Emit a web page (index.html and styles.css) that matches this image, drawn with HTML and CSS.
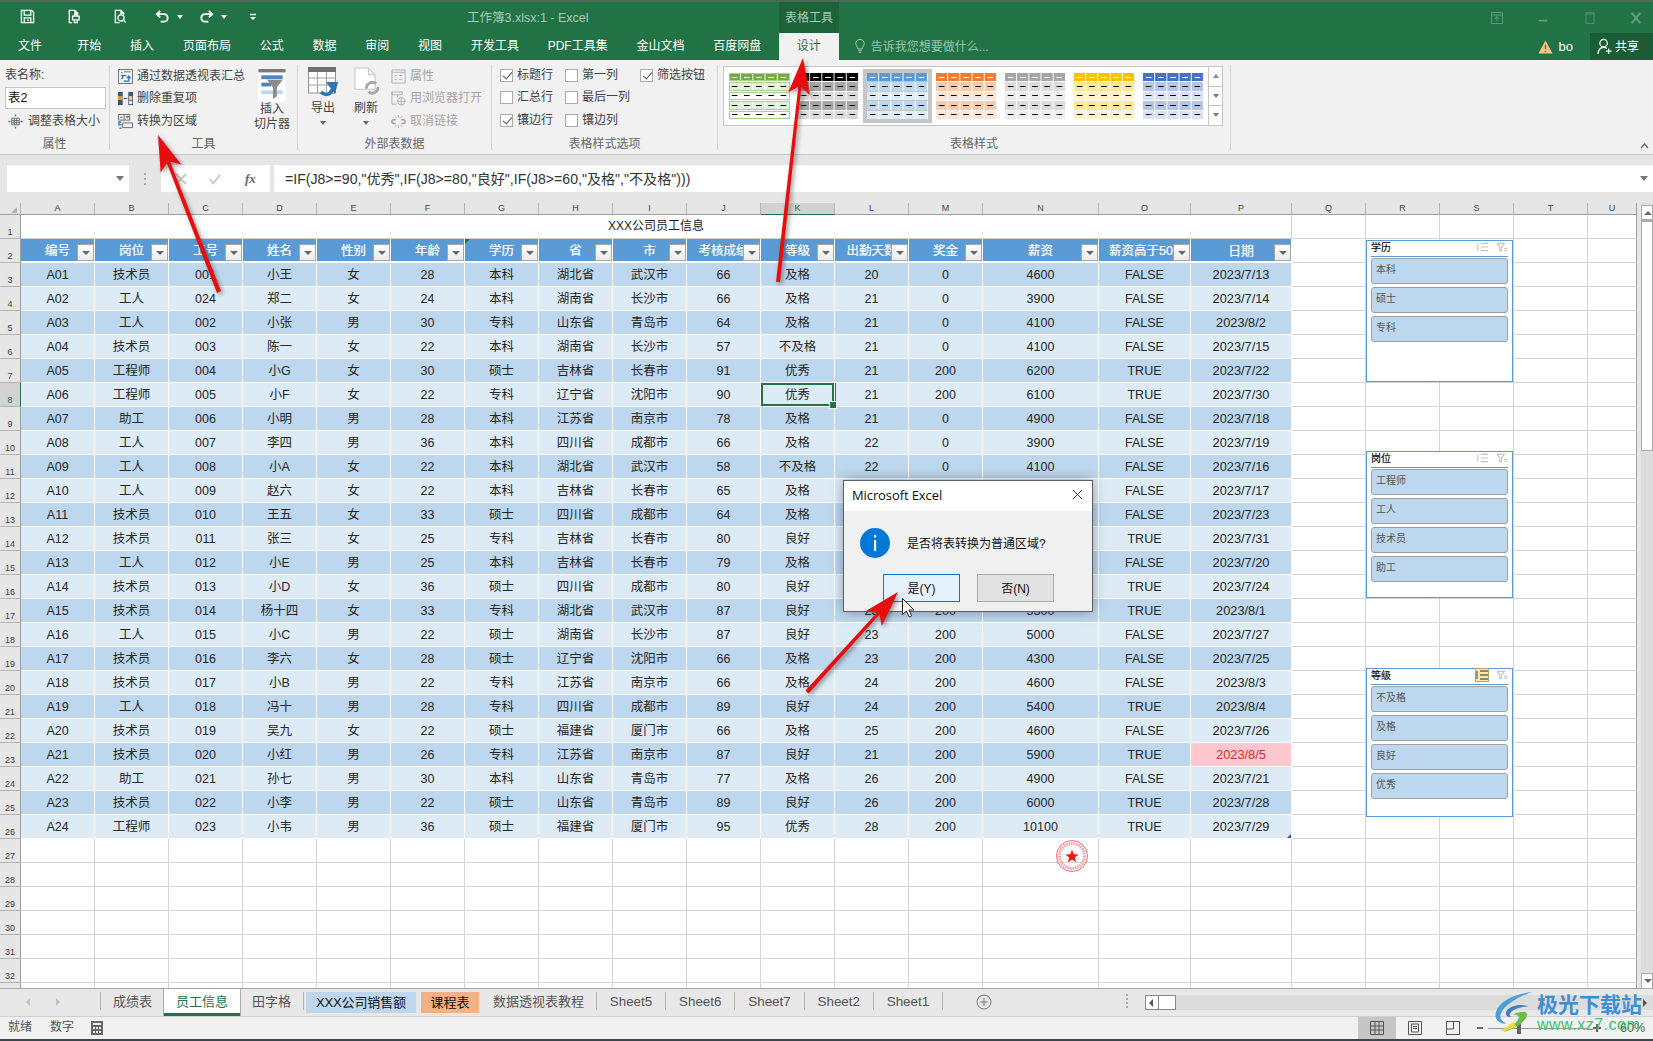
FILE: index.html
```html
<!DOCTYPE html>
<html lang="zh-CN">
<head>
<meta charset="utf-8">
<title>工作簿3.xlsx:1 - Excel</title>
<link rel="stylesheet" href="styles.css">
</head>
<body>
<div class="app">

<header class="titlebar">
  <div class="qat">
    <svg class="q q1" viewBox="0 0 16 16"><path d="M1.5 1.5h11l2 2v11h-13z M4.5 1.5v5h7v-5 M4.5 14.5v-5h7v5 M8.5 11v2"/></svg>
    <svg class="q q2" viewBox="0 0 16 16"><path d="M3.5 9V1.5h6l3 3V6 M9.5 1.5v3h3 M3.5 9v5.500h3 M7 7.500h7v4H7z M9 7.500V6h3v1.500 M9 11.500v3h3v-3"/></svg>
    <svg class="q q3" viewBox="0 0 16 16"><path d="M7 14.500H2.500v-13h6l3 3V6 M8.500 1.500v3h3 M13.500 14.500l-2.300-2.600"/><circle cx="8.500" cy="9.500" r="3.300"/></svg>
    <svg class="q q4" viewBox="0 0 16 16"><path d="M5.500 2 2 5.500 5.500 9" class="thick"/><path d="M2.500 5.500h7a4 4 0 0 1 0 8H6" class="thick"/></svg>
    <span class="caret q5"></span>
    <svg class="q q6" viewBox="0 0 16 16"><path d="M10.500 2 14 5.500 10.500 9" class="thick"/><path d="M13.500 5.500h-7a4 4 0 0 0 0 8H10" class="thick"/></svg>
    <span class="caret q7"></span>
    <svg class="q q8" viewBox="0 0 8 8"><path d="M1 1.500h6"/><path d="M1 4h6L4 7z" class="solid"/></svg>
  </div>
  <div class="doc">工作簿3.xlsx:1 - Excel</div>
  <div class="ctx">表格工具</div>
  <div class="winctl">
    <svg viewBox="0 0 14 14"><path d="M.5.5h13v13H.5z M.5 3.500h13 M7 11V5.500 M4.500 8 7 5.500 9.500 8"/></svg>
    <svg viewBox="0 0 14 14"><path d="M2 10h10" class="thick"/></svg>
    <svg viewBox="0 0 14 18"><path d="M1 1h12v16H1z M1 3h12" /></svg>
    <svg viewBox="0 0 14 14"><path d="m2 1 10 12M12 1 2 13" class="thick"/></svg>
  </div>
</header>

<nav class="tabs">
  <span class="tab first">文件</span><span class="tab">开始</span><span class="tab">插入</span><span class="tab">页面布局</span><span class="tab">公式</span><span class="tab">数据</span><span class="tab">审阅</span><span class="tab">视图</span><span class="tab">开发工具</span><span class="tab">PDF工具集</span><span class="tab">金山文档</span><span class="tab">百度网盘</span><span class="tab active">设计</span>
  <span class="tell">
    <svg viewBox="0 0 12 18"><path d="M3.500 12C3 9 1 8.500 1 5.500a5 5 0 0 1 10 0c0 3-2 3.500-2.500 6.500zM4 14h4M4.500 16h3"/></svg>
    告诉我您想要做什么...
  </span>
  <span class="user">
    <svg class="warn" viewBox="0 0 16 16"><path d="M8 1 15.500 15H.5z"/><path d="M8 5.500v5M8 12v1.500" class="mark"/></svg>
    <span>bo</span>
  </span>
  <span class="share">
    <svg viewBox="0 0 16 18"><circle cx="7" cy="5.500" r="4"/><path d="M1 17c.5-4.500 2.500-7 6-7 1.500 0 2.600.4 3.500 1.200M12.500 11v6M9.500 14h6"/></svg>
    共享
  </span>
</nav>

<section class="ribbon">
  <div class="group g1">
    <div class="gbody col">
      <div class="namelabel">表名称:</div>
      <div class="nameinput">表2</div>
      <div class="cmd resize">
        <svg class="ico" viewBox="0 0 16 16"><path class="gr" d="M4 4.500h8v7H4zM4 7h8M4 9.300h8M6.700 4.500v7M9.300 4.500v7"/><path class="bl" d="M8 .5v2M8 13.500v2M.5 8h2M13.500 8h2"/></svg>
        <span>调整表格大小</span>
      </div>
    </div>
    <div class="glabel">属性</div>
  </div>
  <div class="group g2">
    <div class="gbody row">
      <div class="col cmds">
        <div class="cmd">
          <svg class="ico" viewBox="0 0 16 16"><path class="gr" d="M.5.5h15v15H.5zM3 4h2M3 7h2M3 10h2M6.500 3h7"/><path class="bl" d="M6 13h5.500V8M9.500 10l2-2.500 2 2.500M9 7H5v3"/></svg>
          <span>通过数据透视表汇总</span>
        </div>
        <div class="cmd">
          <svg class="ico" viewBox="0 0 16 16"><rect x="0" y="1" width="5" height="14" fill="#44546a"/><rect x="0" y="5.500" width="5" height="4" fill="#e0a03c"/><rect x="11" y="1" width="5" height="14" fill="#44546a"/><rect x="11.800" y="5.500" width="3.400" height="4" fill="#f3d48e"/><rect x="11.800" y="10.500" width="3.400" height="3.500" fill="#fff"/><path class="bl" d="M6 8h4"/></svg>
          <span>删除重复项</span>
        </div>
        <div class="cmd">
          <svg class="ico" viewBox="0 0 16 16"><path class="gr" d="M.5.5h12v6H.5zM6.500.5v6M2 3.500h3M8.500 2.500h3l-1.500 2z"/><path class="gr" d="M5 9.500h10.500v5H5z"/><path class="bl" d="M3.500 8.500H1v3h3M1.500 15H4"/></svg>
          <span>转换为区域</span>
        </div>
      </div>
      <div class="bigbtn slicerbtn">
        <svg class="bigico" viewBox="0 0 28 34"><path d="M0 0h28v34H0z" fill="#fff"/><path d="M0 0h28v3.500H0z" fill="#7a7a7a"/><path d="M3 6.500h22v4H3z" fill="#4e86bd"/><path d="M3 14h10v4H3z" fill="#4e86bd"/><path d="M3 22h22v4H3z" fill="#bdd7ee"/><path d="M9 11h16l-6 8v9l-4 3V19z" fill="#8c8c8c"/></svg>
        <span>插入</span><span>切片器</span>
      </div>
    </div>
    <div class="glabel">工具</div>
  </div>
  <div class="group g3">
    <div class="gbody row">
      <div class="bigbtn export">
        <svg class="bigico" viewBox="0 0 30 30"><path d="M.5 4h27v22H.5z" fill="#fff" stroke="#8c8c8c"/><path d="M0 0h28v5H0z" fill="#707070"/><path d="M.5 11h27M.5 18h27M9.500 5v21M18.500 5v21" stroke="#a0a0a0" fill="none"/><path d="M13 25c4 4 9 3 11-2l1.500-3" stroke="#2e75b6" stroke-width="3.500" fill="none"/><path d="M18 15h12l-3 12z" fill="#2e75b6"/></svg>
        <span>导出</span><span class="caret dark"></span>
      </div>
      <div class="bigbtn refresh">
        <svg class="bigico" viewBox="0 0 26 30"><path d="M1 .5h14l7 7v15H1z M15 .5v7h7" fill="#fff" stroke="#c4c4c4"/><path d="M13 22a6 6 0 0 1 10-5M25 20a6 6 0 0 1-10 5" stroke="#a8a8a8" stroke-width="3" fill="none"/></svg>
        <span>刷新</span><span class="caret dark"></span>
      </div>
      <div class="col cmds off">
        <div class="cmd">
          <svg class="ico" viewBox="0 0 16 16"><path class="lg" d="M1 1h14v14H1zM1 3.500h14M4 7h2.500M8.500 7H12M4 11h2.500M8.500 11H12"/></svg>
          <span>属性</span>
        </div>
        <div class="cmd">
          <svg class="ico" viewBox="0 0 16 16"><path class="lg" d="M1 1h11v3H1zM1 1v13h5M7 4v3"/><circle class="lg" cx="11" cy="11" r="4"/><path class="lg" d="M7 11h8M11 7v8"/></svg>
          <span>用浏览器打开</span>
        </div>
        <div class="cmd">
          <svg class="ico" viewBox="0 0 16 16"><path class="lg2" d="M5 6H3a2 2 0 0 0 0 4h2M11 6h2a2 2 0 0 1 0 4h-2"/><path class="lg" d="M8 1v3M4 2l2 2.500M12 2l-2 2.500M8 15v-3M4 14l2-2.500M12 14l-2-2.500"/></svg>
          <span>取消链接</span>
        </div>
      </div>
    </div>
    <div class="glabel">外部表数据</div>
  </div>
  <div class="group g4">
    <div class="gbody checks">
      <label class="chk"><i class="box on"></i>标题行</label>
      <label class="chk"><i class="box"></i>第一列</label>
      <label class="chk"><i class="box on"></i>筛选按钮</label>
      <label class="chk"><i class="box"></i>汇总行</label>
      <label class="chk"><i class="box"></i>最后一列</label>
      <span></span>
      <label class="chk"><i class="box on"></i>镶边行</label>
      <label class="chk"><i class="box"></i>镶边列</label>
    </div>
    <div class="glabel">表格样式选项</div>
  </div>
  <div class="group g5">
    <div class="gbody">
      <div class="gallery">
        <div class="cell"><div class="sw green"><i></i><i></i><i></i><i></i><i></i></div></div>
        <div class="cell"><div class="sw black"><i></i><i></i><i></i><i></i><i></i></div></div>
        <div class="cell sel"><div class="sw blue"><i></i><i></i><i></i><i></i><i></i></div></div>
        <div class="cell"><div class="sw orange"><i></i><i></i><i></i><i></i><i></i></div></div>
        <div class="cell"><div class="sw gray"><i></i><i></i><i></i><i></i><i></i></div></div>
        <div class="cell"><div class="sw yellow"><i></i><i></i><i></i><i></i><i></i></div></div>
        <div class="cell"><div class="sw navy"><i></i><i></i><i></i><i></i><i></i></div></div>
        <div class="gscroll"><b class="up"></b><b class="dn"></b><b class="more"></b></div>
      </div>
    </div>
    <div class="glabel">表格样式</div>
  </div>
  <div class="ribbonend"><svg viewBox="0 0 9 6"><path d="M1 5 4.500 1 8 5"/></svg></div>
</section>

<div class="fbar">
  <div class="namebox"><span class="tri"></span></div>
  <div class="fdots"></div>
  <div class="fbtns">
    <svg viewBox="0 0 12 12"><path d="m1 1 10 10M11 1 1 11"/></svg>
    <svg viewBox="0 0 14 12"><path d="m1 6 4 5 8-10"/></svg>
    <em>fx</em>
  </div>
  <div class="formula"><span>=IF(J8&gt;=90,"优秀",IF(J8&gt;=80,"良好",IF(J8&gt;=60,"及格","不及格")))</span><i class="fexp"></i></div>
</div>

<main class="sheet">
<div class="pane">
<table class="grid">
<colgroup><col class="w21"><col class="w74" span="13"><col class="w116"><col class="w92"><col class="w101"><col class="w74" span="4"><col class="w49"></colgroup>
<thead><tr><th class="corner"><th>A<th>B<th>C<th>D<th>E<th>F<th>G<th>H<th>I<th>J<th class="on">K<th>L<th>M<th>N<th>O<th>P<th>Q<th>R<th>S<th>T<th>U</tr></thead>
<tbody>
<tr class="t1"><th>1<td colspan="16" class="caption">XXX公司员工信息<td><td><td><td><td></tr>
<tr class="hd"><th>2<td>编号<i class="fb"></i><td>岗位<i class="fb"></i><td>工号<i class="fb"></i><td>姓名<i class="fb"></i><td>性别<i class="fb"></i><td>年龄<i class="fb"></i><td class="flag">学历<i class="fb"></i><td>省<i class="fb"></i><td>市<i class="fb"></i><td>考核成绩<i class="fb"></i><td>等级<i class="fb"></i><td>出勤天数<i class="fb"></i><td>奖金<i class="fb"></i><td>薪资<i class="fb"></i><td>薪资高于500<i class="fb"></i><td>日期<i class="fb"></i><td class="e"><td class="e"><td class="e"><td class="e"><td class="e"></tr>
<tr class="d"><th>3<td>A01<td>技术员<td>001<td>小王<td>女<td>28<td>本科<td>湖北省<td>武汉市<td>66<td>及格<td>20<td>0<td>4600<td>FALSE<td>2023/7/13<td class="e"><td class="e"><td class="e"><td class="e"><td class="e"></tr>
<tr class="d"><th>4<td>A02<td>工人<td>024<td>郑二<td>女<td>24<td>本科<td>湖南省<td>长沙市<td>66<td>及格<td>21<td>0<td>3900<td>FALSE<td>2023/7/14<td class="e"><td class="e"><td class="e"><td class="e"><td class="e"></tr>
<tr class="d"><th>5<td>A03<td>工人<td>002<td>小张<td>男<td>30<td>专科<td>山东省<td>青岛市<td>64<td>及格<td>21<td>0<td>4100<td>FALSE<td>2023/8/2<td class="e"><td class="e"><td class="e"><td class="e"><td class="e"></tr>
<tr class="d"><th>6<td>A04<td>技术员<td>003<td>陈一<td>女<td>22<td>本科<td>湖南省<td>长沙市<td>57<td>不及格<td>21<td>0<td>4100<td>FALSE<td>2023/7/15<td class="e"><td class="e"><td class="e"><td class="e"><td class="e"></tr>
<tr class="d"><th>7<td>A05<td>工程师<td>004<td>小G<td>女<td>30<td>硕士<td>吉林省<td>长春市<td>91<td>优秀<td>21<td>200<td>6200<td>TRUE<td>2023/7/22<td class="e"><td class="e"><td class="e"><td class="e"><td class="e"></tr>
<tr class="d"><th class="on">8<td>A06<td>工程师<td>005<td>小F<td>女<td>22<td>专科<td>辽宁省<td>沈阳市<td>90<td class="active">优秀<td>21<td>200<td>6100<td>TRUE<td>2023/7/30<td class="e"><td class="e"><td class="e"><td class="e"><td class="e"></tr>
<tr class="d"><th>9<td>A07<td>助工<td>006<td>小明<td>男<td>28<td>本科<td>江苏省<td>南京市<td>78<td>及格<td>21<td>0<td>4900<td>FALSE<td>2023/7/18<td class="e"><td class="e"><td class="e"><td class="e"><td class="e"></tr>
<tr class="d"><th>10<td>A08<td>工人<td>007<td>李四<td>男<td>36<td>本科<td>四川省<td>成都市<td>66<td>及格<td>22<td>0<td>3900<td>FALSE<td>2023/7/19<td class="e"><td class="e"><td class="e"><td class="e"><td class="e"></tr>
<tr class="d"><th>11<td>A09<td>工人<td>008<td>小A<td>女<td>22<td>本科<td>湖北省<td>武汉市<td>58<td>不及格<td>22<td>0<td>4100<td>FALSE<td>2023/7/16<td class="e"><td class="e"><td class="e"><td class="e"><td class="e"></tr>
<tr class="d"><th>12<td>A10<td>工人<td>009<td>赵六<td>女<td>22<td>本科<td>吉林省<td>长春市<td>65<td>及格<td>22<td>0<td>4300<td>FALSE<td>2023/7/17<td class="e"><td class="e"><td class="e"><td class="e"><td class="e"></tr>
<tr class="d"><th>13<td>A11<td>技术员<td>010<td>王五<td>女<td>33<td>硕士<td>四川省<td>成都市<td>64<td>及格<td>23<td>0<td>4400<td>FALSE<td>2023/7/23<td class="e"><td class="e"><td class="e"><td class="e"><td class="e"></tr>
<tr class="d"><th>14<td>A12<td>技术员<td>011<td>张三<td>女<td>25<td>专科<td>吉林省<td>长春市<td>80<td>良好<td>23<td>200<td>5000<td>TRUE<td>2023/7/31<td class="e"><td class="e"><td class="e"><td class="e"><td class="e"></tr>
<tr class="d"><th>15<td>A13<td>工人<td>012<td>小E<td>男<td>25<td>本科<td>吉林省<td>长春市<td>79<td>及格<td>23<td>200<td>4500<td>FALSE<td>2023/7/20<td class="e"><td class="e"><td class="e"><td class="e"><td class="e"></tr>
<tr class="d"><th>16<td>A14<td>技术员<td>013<td>小D<td>女<td>36<td>硕士<td>四川省<td>成都市<td>80<td>良好<td>23<td>200<td>5200<td>TRUE<td>2023/7/24<td class="e"><td class="e"><td class="e"><td class="e"><td class="e"></tr>
<tr class="d"><th>17<td>A15<td>技术员<td>014<td>杨十四<td>女<td>33<td>专科<td>湖北省<td>武汉市<td>87<td>良好<td>23<td>200<td>5300<td>TRUE<td>2023/8/1<td class="e"><td class="e"><td class="e"><td class="e"><td class="e"></tr>
<tr class="d"><th>18<td>A16<td>工人<td>015<td>小C<td>男<td>22<td>硕士<td>湖南省<td>长沙市<td>87<td>良好<td>23<td>200<td>5000<td>FALSE<td>2023/7/27<td class="e"><td class="e"><td class="e"><td class="e"><td class="e"></tr>
<tr class="d"><th>19<td>A17<td>技术员<td>016<td>李六<td>女<td>28<td>硕士<td>辽宁省<td>沈阳市<td>66<td>及格<td>23<td>200<td>4300<td>FALSE<td>2023/7/25<td class="e"><td class="e"><td class="e"><td class="e"><td class="e"></tr>
<tr class="d"><th>20<td>A18<td>技术员<td>017<td>小B<td>男<td>22<td>专科<td>江苏省<td>南京市<td>66<td>及格<td>24<td>200<td>4600<td>FALSE<td>2023/8/3<td class="e"><td class="e"><td class="e"><td class="e"><td class="e"></tr>
<tr class="d"><th>21<td>A19<td>工人<td>018<td>冯十<td>男<td>28<td>专科<td>四川省<td>成都市<td>89<td>良好<td>24<td>200<td>5400<td>TRUE<td>2023/8/4<td class="e"><td class="e"><td class="e"><td class="e"><td class="e"></tr>
<tr class="d"><th>22<td>A20<td>技术员<td>019<td>吴九<td>女<td>22<td>硕士<td>福建省<td>厦门市<td>66<td>及格<td>25<td>200<td>4600<td>FALSE<td>2023/7/26<td class="e"><td class="e"><td class="e"><td class="e"><td class="e"></tr>
<tr class="d"><th>23<td>A21<td>技术员<td>020<td>小红<td>男<td>26<td>专科<td>江苏省<td>南京市<td>87<td>良好<td>21<td>200<td>5900<td>TRUE<td class="pink">2023/8/5<td class="e"><td class="e"><td class="e"><td class="e"><td class="e"></tr>
<tr class="d"><th>24<td>A22<td>助工<td>021<td>孙七<td>男<td>30<td>本科<td>山东省<td>青岛市<td>77<td>及格<td>26<td>200<td>4900<td>FALSE<td>2023/7/21<td class="e"><td class="e"><td class="e"><td class="e"><td class="e"></tr>
<tr class="d"><th>25<td>A23<td>技术员<td>022<td>小李<td>男<td>22<td>硕士<td>山东省<td>青岛市<td>89<td>良好<td>26<td>200<td>6000<td>TRUE<td>2023/7/28<td class="e"><td class="e"><td class="e"><td class="e"><td class="e"></tr>
<tr class="d"><th>26<td>A24<td>工程师<td>023<td>小韦<td>男<td>36<td>硕士<td>福建省<td>厦门市<td>95<td>优秀<td>28<td>200<td>10100<td>TRUE<td class="last">2023/7/29<td class="e"><td class="e"><td class="e"><td class="e"><td class="e"></tr>
<tr class="x"><th>27<td><td><td><td><td><td><td><td><td><td><td><td><td><td><td><td><td><td><td><td><td></tr>
<tr class="x"><th>28<td><td><td><td><td><td><td><td><td><td><td><td><td><td><td><td><td><td><td><td><td></tr>
<tr class="x"><th>29<td><td><td><td><td><td><td><td><td><td><td><td><td><td><td><td><td><td><td><td><td></tr>
<tr class="x"><th>30<td><td><td><td><td><td><td><td><td><td><td><td><td><td><td><td><td><td><td><td><td></tr>
<tr class="x"><th>31<td><td><td><td><td><td><td><td><td><td><td><td><td><td><td><td><td><td><td><td><td></tr>
<tr class="x"><th>32<td><td><td><td><td><td><td><td><td><td><td><td><td><td><td><td><td><td><td><td><td></tr>
<tr class="x"><th><td><td><td><td><td><td><td><td><td><td><td><td><td><td><td><td><td><td><td><td><td></tr>
</tbody>
</table>
</div>
<div class="vbar"><b class="vup"></b><b class="vthumb"></b><span class="vtrack"></span><b class="vdn"></b></div>
</main>

<footer class="sheettabs">
  <div class="snav"><span class="l"></span><span class="r"></span></div>
  <span class="sep"></span>
  <span class="st">成绩表</span>
  <span class="st cur">员工信息</span>
  <span class="st">田字格</span>
  <span class="sep"></span>
  <span class="st col1">XXX公司销售额</span>
  <span class="st col2">课程表</span>
  <span class="st">数据透视表教程</span>
  <span class="sep"></span>
  <span class="st sn">Sheet5</span><span class="sep"></span>
  <span class="st sn">Sheet6</span><span class="sep"></span>
  <span class="st sn">Sheet7</span><span class="sep"></span>
  <span class="st sn">Sheet2</span><span class="sep"></span>
  <span class="st sn">Sheet1</span><span class="sep"></span>
  <svg class="addsheet" viewBox="0 0 16 16"><circle cx="8" cy="8" r="7"/><path d="M8 4v8M4 8h8"/></svg>
  <div class="hs"><span class="hdots"></span><b class="hleft"></b><b class="hthumb"></b><span class="htrack"></span><b class="hright"></b></div>
</footer>

<div class="status">
  <span class="s1">就绪</span><span class="s2">数字</span>
  <svg class="calc" viewBox="0 0 12 14"><path d="M0 0h12v14H0z" fill="#666"/><path d="M2 2h8v2H2z" fill="#eee"/><path d="M2 6h2v2H2zM5 6h2v2H5zM8 6h2v2H8zM2 10h2v2H2zM5 10h2v2H5zM8 10h2v2H8z" fill="#eee"/></svg>
  <div class="views">
    <span class="view on"><svg viewBox="0 0 14 14"><path d="M.5.5h13v13H.5zM.5 5h13M.5 9h13M5 .5v13M9 .5v13"/></svg></span>
    <span class="view"><svg viewBox="0 0 14 14"><path d="M.5.5h13v13H.5zM3.500 3h7v8h-7zM5 5.500h4M5 7.500h4"/></svg></span>
    <span class="view"><svg viewBox="0 0 14 14"><path d="M.5.5h13v13H.5zM.5 8h7V.5"/></svg></span>
  </div>
  <div class="zoombar"><i class="minus"></i><span class="slider"><i></i></span><i class="plus"></i><span class="pct">60%</span></div>
</div>

<aside class="slicer s-a">
  <div class="sh"><span>学历</span><svg class="si" viewBox="0 0 12 10"><path d="M4 1h8M4 5h8M4 9h8M1 1v8"/></svg><svg class="si" viewBox="0 0 12 10"><path d="M0 1h8L5 5v4H3V5zM8 6l3 3M11 6 8 9"/></svg></div>
  <div class="si-item">本科</div><div class="si-item">硕士</div><div class="si-item">专科</div>
</aside>
<aside class="slicer s-b">
  <div class="sh"><span>岗位</span><svg class="si" viewBox="0 0 12 10"><path d="M4 1h8M4 5h8M4 9h8M1 1v8"/></svg><svg class="si" viewBox="0 0 12 10"><path d="M0 1h8L5 5v4H3V5zM8 6l3 3M11 6 8 9"/></svg></div>
  <div class="si-item">工程师</div><div class="si-item">工人</div><div class="si-item">技术员</div><div class="si-item">助工</div>
</aside>
<aside class="slicer s-c">
  <div class="sh"><span>等级</span><svg class="si hot" viewBox="0 0 12 10"><path d="M4 1h8M4 5h8M4 9h8M1 1v8"/></svg><svg class="si" viewBox="0 0 12 10"><path d="M0 1h8L5 5v4H3V5zM8 6l3 3M11 6 8 9"/></svg></div>
  <div class="si-item">不及格</div><div class="si-item">及格</div><div class="si-item">良好</div><div class="si-item">优秀</div>
</aside>

<svg class="stamp" viewBox="0 0 34 34"><circle cx="17" cy="17" r="15.500"/><circle class="ring" cx="17" cy="17" r="12.500"/><path class="star" d="m17 10.500 1.700 4.800 5 .1-4 3 1.500 4.900-4.200-2.900-4.200 2.900 1.500-4.900-4-3 5-.1z"/></svg>

<div class="dialog" role="dialog">
  <div class="dtitle"><span>Microsoft Excel</span><svg viewBox="0 0 12 12"><path d="m1 1 10 10M11 1 1 11"/></svg></div>
  <div class="dbody">
    <div class="dmsg">
      <svg class="info" viewBox="0 0 30 30"><circle cx="15" cy="15" r="15"/><path d="M14 12h2.200v11H14z M14 7h2.200v2.400H14z"/></svg>
      <span>是否将表转换为普通区域?</span>
    </div>
    <div class="dbtns"><button class="btn yes">是(Y)</button><button class="btn">否(N)</button></div>
  </div>
</div>

<svg class="arrows" viewBox="0 0 1653 1041">
  <polygon points="217,293 221,291 169.500,160 166.500,162"/>
  <polygon points="158,135 181.300,164.500 168.100,161.100 160.700,172.500"/>
  <polygon points="776,282 780,282 801.500,85.500 798.500,85.500"/>
  <polygon points="803,58 809.900,95 799.900,85.800 788.100,92.600"/>
  <polygon points="805.500,690.500 808.500,693.500 880,614 878,611.500"/>
  <polygon points="898,592 881.800,626 879.100,612.700 865.600,611.200"/>
</svg>
<svg class="cursor" viewBox="0 0 12 20"><path d="M.5.5v16l4-3.500 2.700 6 2.500-1.200L7 12h5z"/></svg>

<div class="watermark">
  <svg viewBox="0 0 44 44"><path d="M40 1C24 3 6 9 2 22c-2 8 4 13 11 12-6-2-8-7-5-12C12 14 26 6 40 1z" fill="#4d9ed9"/><path d="M36 16c-8-3-19-1-23 5-2 4 1 7 5 6-2-1-2-3 0-5 4-4 11-5 18-6z" fill="#3f7fc0"/><path d="M20 24c5-1 12-4 14-1 3 5-7 15-24 20 8-6 16-11 16-16-1-2-4-2-6-3z" fill="#6abf4b"/><path d="M6 42c5-3 11-6 14-10l3 5c-5 3-11 5-17 5z" fill="#f2d93b"/></svg>
  <div class="wm-t"><span class="wm-cn">极光下载站</span><span class="wm-en">www.xz7.com</span></div>
</div>

</div>
</body>
</html>
```
FILE: styles.css
```css
* { box-sizing: border-box; }
html, body { margin: 0; padding: 0; }
body {
  width: 1653px; height: 1041px; overflow: hidden; background: #f1f1f1;
  font-family: "Liberation Sans", "Noto Sans CJK SC", sans-serif; color: #444;
}
.app { position: relative; width: 1653px; height: 1041px; display: flex; flex-direction: column; overflow: hidden; }

/* title bar */
.titlebar { height: 33px; background: #217346; display: flex; position: relative; border-top: 2px solid #4b6a58; flex: none; }
.qat { display: flex; align-items: center; height: 29px; width: 467px; flex: none; padding-left: 20px; }
.q { fill: none; stroke: #fff; stroke-width: 1.4; width: 15px; height: 15px; flex: none; }
.q .thick { stroke-width: 2; }
.q .solid { fill: #fff; stroke: none; }
.q2 { margin-left: 31px; }
.q3 { margin-left: 32px; }
.q4 { margin-left: 27px; }
.q5 { margin-left: 7px; }
.q6 { margin-left: 16px; }
.q7 { margin-left: 7px; }
.q8 { margin-left: 22px; width: 8px; height: 8px; }
.caret { display: inline-block; border: 3px solid transparent; border-top: 4px solid #fff; border-bottom: 0; width: 0; height: 0; flex: none; }
.caret.dark { border-top-color: #666; margin-top: 5px; }
.doc { color: #a9cab6; font-size: 12.5px; line-height: 32px; width: 312px; flex: none; }
.ctx { width: 60px; height: 31px; background: #1d6339; color: #a9cab6; font-size: 12px; line-height: 32px; text-align: center; flex: none; }
.winctl { display: flex; align-items: center; height: 31px; margin-left: auto; padding-right: 11px; gap: 34.5px; }
.winctl svg { width: 12px; height: 12px; fill: none; stroke: #6f9f85; stroke-width: 1; }
.winctl svg .thick { stroke-width: 2; }

/* ribbon tabs */
.tabs { height: 27px; background: #217346; display: flex; align-items: stretch; flex: none; padding-left: 3.5px; color: #fff; font-size: 12px; line-height: 26px; position: relative; }
.tab { padding: 0 14.4px; white-space: nowrap; }
.tab.first { padding-right: 21px; }
.tab.active { background: #f1f1f1; color: #217346; padding: 0 18px; margin-left: 3px; }
.tell { display: flex; align-items: center; gap: 6px; color: #9ec4ae; margin-left: 16px; font-size: 12px; }
.tell svg { width: 10px; height: 17px; fill: none; stroke: #c8dcd0; stroke-width: 1; }
.user { display: flex; align-items: center; gap: 6px; margin-left: auto; font-size: 13px; padding-right: 17px; }
.warn { width: 15px; height: 16px; }
.warn path { fill: #f3c78a; }
.warn .mark { fill: none; stroke: #8a6a3a; stroke-width: 1.5; }
.share { width: 63px; background: #1a5c36; display: flex; align-items: center; gap: 3px; padding-left: 7px; font-size: 12px; }
.share svg { width: 15px; height: 17px; fill: none; stroke: #fff; stroke-width: 1.3; }

/* ribbon */
.ribbon { height: 95px; background: #f1f1f1; border-bottom: 1px solid #c6c6c6; display: flex; padding: 5px 0 4px; flex: none; font-size: 12px; line-height: 15px; }
.group { display: flex; flex-direction: column; border-right: 1px solid #d2d2d2; flex: none; }
.gbody { height: 72px; flex: none; }
.glabel { height: 13px; margin-top: 1px; text-align: center; color: #666; line-height: 13px; flex: none; }
.row { display: flex; }
.col { display: flex; flex-direction: column; }
.g1 { width: 110px; } .g2 { width: 188px; } .g3 { width: 194px; } .g4 { width: 226px; } .g5 { width: 513px; }
.g1 .gbody { padding-left: 5px; }
.namelabel { height: 20px; line-height: 20px; }
.nameinput { width: 101px; height: 22px; margin-top: 2px; background: #fff; border: 1px solid #c6c6c6; color: #111; font-size: 12.5px; line-height: 20px; padding-left: 2px; }
.cmd { height: 22.5px; display: flex; align-items: center; gap: 4px; white-space: nowrap; }
.resize { height: 24px; padding-left: 3px; gap: 5px; }
.ico { width: 15px; height: 15px; flex: none; }
.ico path, .ico circle { fill: none; stroke-width: 1; }
.ico .gr { stroke: #6a6a6a; }
.ico .bl { stroke: #2e75b6; stroke-width: 1.4; }
.ico .lg { stroke: #b0b0b0; }
.ico .lg2 { stroke: #a0a0a0; stroke-width: 1.6; }
.g2 .cmds { padding-left: 8px; }
.off { color: #a6a6a6; }
.bigbtn { display: flex; flex-direction: column; align-items: center; width: 50px; padding-top: 4px; flex: none; }
.bigico { display: block; }
.slicerbtn { margin-left: auto; }
.slicerbtn .bigico { width: 28px; height: 33px; }
.export, .refresh { width: 36px; padding-top: 2px; }
.export { margin-left: 7px; }
.refresh { margin-left: 7px; }
.export .bigico { width: 30px; height: 30px; }
.refresh .bigico { width: 25px; height: 30px; }
.export span:first-of-type, .refresh span:first-of-type { margin-top: 4px; }
.g3 .cmds { margin-left: 7px; }
.checks { display: grid; grid-template-columns: 65px 75px auto; grid-auto-rows: 22.5px; padding-left: 8px; margin-top: -1px; margin-bottom: 1px; }
.chk { display: flex; align-items: center; gap: 4px; white-space: nowrap; }
.box { width: 13px; height: 13px; background: #fff; border: 1px solid #ababab; position: relative; flex: none; }
.box.on::after { content: ""; position: absolute; left: 3.5px; top: .5px; width: 4px; height: 8px; border: solid #555; border-width: 0 1.4px 1.4px 0; transform: rotate(40deg); }
.g5 .gbody { padding: 1px 0 0 5px; }
.gallery { width: 500px; height: 60px; display: flex; background: #fff; border: 1px solid #c6c6c6; padding-left: 1px; }
.cell { width: 69px; height: 54px; margin-top: 2px; padding: 4px 4px 0; flex: none; }
.cell.sel { background: #c6c6c6; }
.sw { width: 61px; height: 46px; display: flex; flex-direction: column; gap: 1px; }
.sw i {
  display: block; height: 8.4px; --d: #000;
  background-color: var(--b);
  background-image: linear-gradient(90deg, transparent 2.5px, var(--d) 2.5px, var(--d) 8.5px, transparent 8.5px), linear-gradient(90deg, #fff 1px, transparent 1px);
  background-size: 12.2px 1.4px, 12.2px 100%;
  background-repeat: repeat-x;
  background-position: 0 center, -1px 0;
}
.sw i:nth-child(1) { background-color: var(--h); --d: #fff; }
.sw i:nth-child(2), .sw i:nth-child(4) { background-color: var(--a); }
.green { --h: #70ad47; --a: #e2efda; --b: #fff; }
.green i { outline: 1px solid #a9d08e; outline-offset: -1px; }
.black { --h: #000; --a: #a6a6a6; --b: #d9d9d9; }
.blue { --h: #5b9bd5; --a: #bdd7ee; --b: #ddebf7; }
.orange { --h: #ed7d31; --a: #f8cbad; --b: #fce4d6; }
.gray { --h: #a5a5a5; --a: #dbdbdb; --b: #ededed; }
.yellow { --h: #ffc000; --a: #ffe699; --b: #fff2cc; }
.navy { --h: #4472c4; --a: #b4c6e7; --b: #d9e1f2; }
.gscroll { margin-left: auto; width: 15px; display: flex; flex-direction: column; }
.gscroll b { flex: 1; border-left: 1px solid #c6c6c6; border-bottom: 1px solid #c6c6c6; position: relative; }
.gscroll b:last-child { border-bottom: 0; }
.gscroll b::after { content: ""; position: absolute; left: 4px; top: 7px; border: 3px solid transparent; }
.up::after { border-bottom: 4px solid #888 !important; border-top: 0 !important; }
.dn::after, .more::after { border-top: 4px solid #777 !important; border-bottom: 0 !important; }
.ribbonend { flex: 1; display: flex; justify-content: flex-end; align-items: flex-end; padding: 0 4px 0 0; }
.ribbonend svg { width: 9px; height: 6px; fill: none; stroke: #666; stroke-width: 1.3; margin-bottom: 1px; }

/* formula bar */
.fbar { height: 48px; background: #e6e6e6; display: flex; padding: 10px 0 11px 7px; flex: none; }
.namebox { width: 122px; background: #fff; position: relative; }
.tri { position: absolute; right: 5px; top: 11px; border: 4px solid transparent; border-top: 5px solid #777; border-bottom: 0; }
.fdots { width: 32px; position: relative; }
.fdots::after { content: ""; position: absolute; left: 15px; top: 8px; width: 2px; height: 2px; background: #aaa; box-shadow: 0 5px #aaa, 0 10px #aaa; }
.fbtns { width: 109px; background: #fff; display: flex; align-items: center; padding-left: 14px; }
.fbtns svg { width: 12px; height: 12px; fill: none; stroke: #c8c8c8; stroke-width: 2; margin-right: 22px; flex: none; }
.fbtns em { font: italic bold 13px "Liberation Serif", serif; color: #666; margin-left: 2px; }
.formula { flex: 1; background: #fff; margin-left: 4px; display: flex; align-items: center; padding-left: 11px; padding-bottom: 1px; position: relative; font-size: 14.1px; color: #333; }
.fexp { position: absolute; right: 5px; top: 11px; border: 4px solid transparent; border-top: 5px solid #777; border-bottom: 0; }

/* sheet */
.sheet { height: 786px; display: flex; flex: none; background: #e6e6e6; }
.pane { width: 1641px; overflow: hidden; flex: none; border-bottom: 1px solid #a6a6a6; }
.grid { table-layout: fixed; border-collapse: separate; border-spacing: 0; width: 1637px; font-size: 12.5px; color: #262626; background: #fff; }
.w21 { width: 21px; } .w74 { width: 74px; } .w116 { width: 116px; } .w92 { width: 92px; } .w101 { width: 101px; } .w49 { width: 49px; }
.grid thead th { height: 11px; padding: 0; font-size: 9px; line-height: 11px; font-weight: 400; background: #e6e6e6; color: #444; border-right: 1px solid #b4b4b4; border-bottom: 1px solid #9f9f9f; }
.grid thead th:last-child { border-right: 1px solid #9f9f9f; }
.grid thead th.on { background: #d2d2d2; color: #217346; border-bottom-color: #217346; }
.corner { position: relative; }
.corner::after { content: ""; position: absolute; right: 3px; bottom: 1px; border-style: solid; border-width: 0 0 6px 6px; border-color: transparent transparent #b0b0b0 transparent; }
.grid tbody tr { height: 24px; }
.grid tbody th { padding: 0 0 1px; font-size: 9px; line-height: 10px; font-weight: 400; background: #e6e6e6; color: #444; border-right: 1px solid #9f9f9f; border-bottom: 1px solid #b4b4b4; vertical-align: bottom; }
.grid tbody th.on { background: #d2d2d2; color: #217346; border-right-color: #217346; }
.grid td { padding: 1px 0 0; text-align: center; white-space: nowrap; overflow: hidden; border-right: 1px solid #d4d4d4; border-bottom: 1px solid #d4d4d4; line-height: 14px; }
.grid td:last-child { border-right: 1px solid #9f9f9f; }
.grid td.caption { font-size: 12px; border-right-color: #d4d4d4; padding: 0 0 2px; color: #222; }
.hd td:not(.e) { background: #5b9bd5; color: #fff; border-right-color: #fff; border-bottom: 2px solid #fff; position: relative; overflow: hidden; font-weight: 400; -webkit-text-stroke: .2px #fff; }
.d td:not(.e) { border-right-color: #fff; border-bottom-color: #fff; }
.d:nth-child(odd) td:not(.e) { background: #bdd7ee; }
.d:nth-child(even) td:not(.e) { background: #ddebf7; }
.grid td:nth-child(17):not(.caption) { font-size: 12.8px; }
.fb { position: absolute; right: 0; bottom: 0; width: 17px; height: 17px; background: linear-gradient(#fff, #eaeaea); border: 1px solid #a6a6a6; }
.fb::after { content: ""; position: absolute; left: 4px; top: 6px; border: 4px solid transparent; border-top: 4px solid #666; border-bottom: 0; }
.flag::before { content: ""; position: absolute; left: 0; top: 0; border-style: solid; border-width: 5px 5px 0 0; border-color: #0d7a2f transparent transparent transparent; }
.d td.pink { background: #ffc7ce !important; color: #d0302f; }
.d:nth-child(n) td.active { position: relative; overflow: visible; box-shadow: inset 0 0 0 2px #217346, 1px 0 #217346; }
.d td.active::after { content: ""; position: absolute; right: -3px; bottom: -3px; width: 6px; height: 6px; background: #217346; border: 1px solid #fff; }
.d td.last { position: relative; }
.d td.last::after { content: ""; position: absolute; right: 0; bottom: 0; border-style: solid; border-width: 0 0 4px 4px; border-color: transparent transparent #2f4fa8 transparent; }

.vbar { width: 12px; padding-top: 2px; display: flex; flex-direction: column; flex: none; background: #dcdcdc; }
.vup { height: 16px; background: #fff; border: 1px solid #ababab; border-bottom: 2px solid #ababab; position: relative; flex: none; }
.vup::after { content: ""; position: absolute; left: 1.5px; top: 5px; border: 4px solid transparent; border-bottom: 4px solid #666; border-top: 0; }
.vthumb { height: 230px; background: #fff; border: 1px solid #ababab; flex: none; }
.vtrack { flex: 1; }
.vdn { height: 16px; background: #fff; border: 1px solid #ababab; position: relative; flex: none; }
.vdn::after { content: ""; position: absolute; left: 1.5px; top: 5px; border: 4px solid transparent; border-top: 4px solid #666; border-bottom: 0; }

/* sheet tabs */
.sheettabs { height: 28px; background: #e8e8e8; display: flex; align-items: stretch; flex: none; font-size: 13px; color: #555; border-bottom: 1px solid #cfcfcf; }
.snav { width: 100px; position: relative; flex: none; }
.snav span { position: absolute; top: 9px; border: 4px solid transparent; }
.snav .l { left: 26px; border-right: 4px solid #c2c2c2; border-left: 0; }
.snav .r { left: 56px; border-left: 4px solid #c2c2c2; border-right: 0; }
.sep { width: 1px; background: #b2b2b2; margin: 3px 0 6px; flex: none; }
.st { padding: 0 12px; line-height: 25px; white-space: nowrap; flex: none; }
.st.sn { padding: 0 12.9px; font-size: 13.4px; }
.st.cur { padding: 0 12px; background: #fff; color: #217346; border-bottom: 3px solid #217346; box-shadow: -1px 0 #ababab, 1px 0 #ababab; }
.st.col1 { background: #bdd7ee; color: #111; margin: 3px 5px 3px 2px; padding: 0 10px; line-height: 21px; letter-spacing: -.15px; }
.st.col2 { background: #f4b183; color: #111; margin: 3px 0; padding: 0 9.5px; line-height: 21px; margin-right: 2px; }
.addsheet { width: 16px; height: 16px; margin: 5px 0 0 33px; fill: none; stroke: #777; stroke-width: 1; flex: none; }
.hs { margin-left: auto; width: 527px; display: flex; align-items: center; height: 27px; flex: none; }
.hdots { width: 2px; height: 2px; background: #aaa; box-shadow: 0 -4px #aaa, 0 4px #aaa, 0 -8px #aaa; margin-right: 17px; flex: none; }
.hleft { width: 14px; height: 15px; background: #fff; border: 1px solid #8a8a8a; position: relative; flex: none; }
.hleft::after { content: ""; position: absolute; left: 3px; top: 2.500px; border: 4px solid transparent; border-right: 4px solid #555; border-left: 0; }
.hthumb { width: 17px; height: 15px; background: #fff; border: 1px solid #8a8a8a; border-left: 0; flex: none; }
.htrack { height: 15px; background: #dcdcdc; flex: 1; }
.hright { width: 14px; height: 15px; background: #dcdcdc; position: relative; flex: none; }
.hright::after { content: ""; position: absolute; left: 4px; top: 3.500px; border: 4px solid transparent; border-left: 4px solid #555; border-right: 0; }

/* status bar */
.status { height: 24px; background: #f1f1f1; border-bottom: 2px solid #37474a; display: flex; align-items: stretch; flex: none; font-size: 12px; color: #555; line-height: 21px; }
.s1 { margin-left: 8px; }
.s2 { margin-left: 18px; }
.calc { width: 12px; height: 14px; margin: 4px 0 0 17px; flex: none; }
.views { margin-left: auto; display: flex; }
.view { width: 38px; display: flex; align-items: center; justify-content: center; }
.view.on { background: #c6c6c6; }
.view svg { width: 14px; height: 14px; fill: none; stroke: #555; stroke-width: 1; }
.zoombar { width: 181px; display: flex; align-items: center; padding-left: 5px; }
.minus { width: 6px; height: 2px; background: #666; flex: none; }
.slider { width: 100px; height: 1px; background: #9a9a9a; margin: 0 5px; position: relative; flex: none; }
.slider i { position: absolute; left: 29px; top: -5px; width: 4px; height: 11px; background: #666; }
.plus { width: 8px; height: 8px; flex: none; background: linear-gradient(#666,#666) center/8px 2px no-repeat, linear-gradient(#666,#666) center/2px 8px no-repeat; }
.pct { margin-left: 19px; font-size: 12.5px; }

/* slicers */
.slicer { position: absolute; left: 1366px; width: 147px; background: #fff; border: 1.5px solid #5b9bd5; padding: 0 4px; }
.s-a { top: 240px; height: 142px; }
.s-b { top: 451px; height: 147px; }
.s-c { top: 668px; height: 149px; }
.sh { height: 16px; padding-bottom: 4px; border-bottom: 1.5px solid #5b9bd5; display: flex; align-items: center; font-size: 10px; color: #111; margin-bottom: 1px; }
.sh span { -webkit-text-stroke: .2px #111; }
.si { width: 11px; height: 10px; fill: none; stroke: #c4c4c4; stroke-width: 1.3; margin-left: 9px; flex: none; }
.si:first-of-type { margin-left: auto; }
.si.hot { background: #fde9a9; outline: 1px solid #b8a36a; stroke: #666; width: 12px; height: 12px; }
.si-item { height: 26px; margin-bottom: 3px; background: #bdd7ee; border: 1.5px solid #a0a0a0; border-radius: 3px; font-size: 10px; line-height: 22px; padding-left: 4px; color: #555; }

.stamp { position: absolute; left: 1055px; top: 839px; width: 34px; height: 34px; fill: none; stroke: #f26a6a; }
.stamp .ring { stroke-dasharray: 1.5 1; stroke-width: 3; stroke: #f6a0a0; }
.stamp .star { fill: #f01414; stroke: none; }

/* dialog */
.dialog { position: absolute; left: 843px; top: 480px; width: 250px; height: 132px; background: #f0f0f0; border: 1px solid #5a5f66; box-shadow: 0 0 12px rgba(0, 0, 0, .35); display: flex; flex-direction: column; color: #111; }
.dtitle { height: 30px; background: #fff; display: flex; align-items: center; justify-content: space-between; padding: 0 9px 3px 8px; font: 13px "Open Sans", "Noto Sans", sans-serif; flex: none; }
.dtitle span { letter-spacing: -.1px; }
.dtitle svg { width: 11px; height: 11px; fill: none; stroke: #222; stroke-width: 1; }
.dbody { flex: 1; display: flex; flex-direction: column; }
.dmsg { display: flex; align-items: center; padding: 17px 0 0 16px; font-size: 12px; }
.dmsg span { margin-top: -2px; }
.info { width: 30px; height: 30px; margin-right: 17px; flex: none; }
.info circle { fill: #0078d7; }
.info path { fill: #fff; }
.dbtns { display: flex; margin: 16px 0 0 39px; gap: 17px; }
.btn { width: 77px; height: 28px; background: #e1e1e1; border: 1px solid #adadad; font: 12px "Liberation Sans", "Noto Sans CJK SC", sans-serif; color: #111; padding: 0 0 2px; }
.btn.yes { background: #e5f1fb; border: 1.5px solid #0078d7; }

/* overlays */
.arrows { position: absolute; left: 0; top: 0; width: 1653px; height: 1041px; pointer-events: none; filter: drop-shadow(2px 2px 2px rgba(60, 60, 60, .55)); }
.arrows polygon { fill: #e80c0c; }
.cursor { position: absolute; left: 902px; top: 598px; width: 12px; height: 20px; fill: #fff; stroke: #222; stroke-width: 1; }
.watermark { position: absolute; left: 1494px; top: 990px; display: flex; gap: 1px; pointer-events: none; }
.watermark svg { width: 42px; height: 44px; flex: none; }
.wm-t { display: flex; flex-direction: column; }
.wm-cn { font: 700 21px/26px "Noto Sans CJK SC", sans-serif; color: #3d8fd6; }
.wm-en { font: 16px/18px "Liberation Sans", sans-serif; color: #3fbf6f; letter-spacing: .5px; }
```
